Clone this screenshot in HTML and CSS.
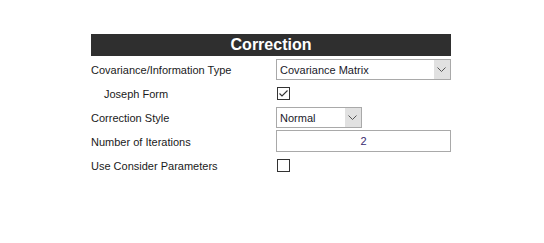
FILE: index.html
```html
<html>
<head>
	<title>Correction</title>
	<link rel="stylesheet" href="styles.css">
</head>
<body>
	<div class='panel'>
		<div class='titulo'>Correction</div>
		<div class='fila'>
			<label>Covariance/Information Type</label>
			<div class='combo ancho'>
				<span class='valor'>Covariance Matrix</span>
				<span class='flecha'><svg width="9" height="5" viewBox="0 0 9 5"><path d="M0.5 0.5 L4.5 4.5 L8.5 0.5" fill="none" stroke="#555" stroke-width="1"/></svg></span>
			</div>
		</div>
		<div class='fila'>
			<label class='sangria'>Joseph Form</label>
			<span class='caja'><svg width="11" height="11" viewBox="0 0 11 11"><path d="M1.5 5.5 L4 8 L9.5 2.5" fill="none" stroke="#333" stroke-width="1.1"/></svg></span>
		</div>
		<div class='fila'>
			<label>Correction Style</label>
			<div class='combo corto'>
				<span class='valor'>Normal</span>
				<span class='flecha'><svg width="9" height="5" viewBox="0 0 9 5"><path d="M0.5 0.5 L4.5 4.5 L8.5 0.5" fill="none" stroke="#555" stroke-width="1"/></svg></span>
			</div>
		</div>
		<div class='fila'>
			<label>Number of Iterations</label>
			<div class='texto'>2</div>
		</div>
		<div class='fila'>
			<label>Use Consider Parameters</label>
			<span class='caja'></span>
		</div>
	</div>
</body>
</html>
```

FILE: styles.css
```css
* {font-family: "Liberation Sans", Arial, sans-serif; box-sizing: border-box;}
body {margin: 0; background-color: white;}
.panel {width: 360px; margin: 34px 0 0 91px;}
.titulo {height: 22px; line-height: 22px; background-color: #2f2f2f; color: white; font-weight: bold; font-size: 16px; text-align: center; margin-bottom: 1px;}
.fila {height: 24px; display: grid; grid-template-columns: 185px 175px; align-items: center;}
label {font-size: 11px; color: #1a1a1a; padding-top: 2px;}
label.sangria {padding-left: 13px;}
.combo {height: 21px; border: 1px solid #a9a9a9; display: flex; background-color: white;}
.combo.ancho {width: 175px;}
.combo.corto {width: 86px;}
.valor {flex: 1; font-size: 11px; color: #1a1a2a; line-height: 20px; padding-left: 3px;}
.flecha {width: 16px; background-color: #e1e1e1; display: flex; align-items: center; justify-content: center; padding-right: 2px;}
.caja {width: 13px; height: 13px; border: 1px solid #333; background-color: white; margin-left: 1px; display: flex; align-items: center; justify-content: center;}
.caja svg {display: block;}
.texto {width: 175px; height: 22px; border: 1px solid #a9a9a9; text-align: center; font-size: 11px; line-height: 21px; color: #3a2a70;}
```
